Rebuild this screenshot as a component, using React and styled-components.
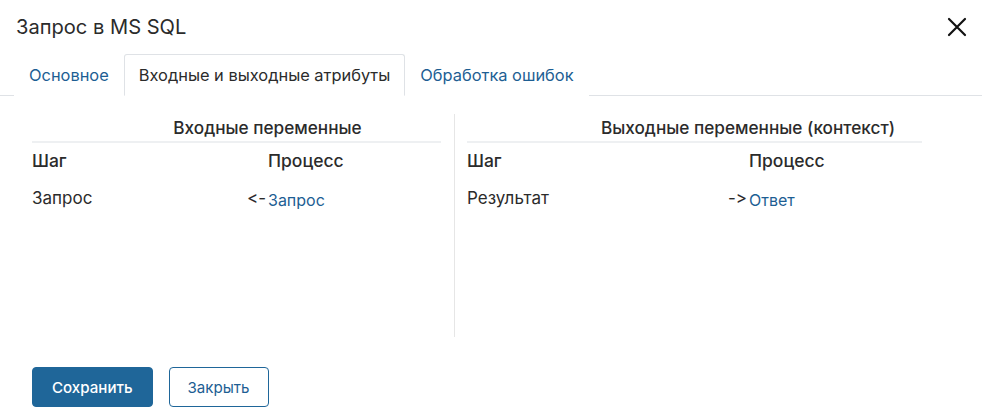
import styled, { createGlobalStyle } from 'styled-components';

const GlobalStyle = createGlobalStyle`
  html, body {
    margin: 0;
    padding: 0;
    background: #ffffff;
  }
  body {
    font-family: Inter, "Noto Sans", sans-serif;
    font-variant-ligatures: none;
    font-feature-settings: "calt" 0, "liga" 0;
    color: #2b2b2b;
  }
`;

const Dialog = styled.div`
  width: 982px;
  height: 415px;
  display: flex;
  flex-direction: column;
  background: #fff;
  box-sizing: border-box;
`;

const Header = styled.div`
  display: flex;
  align-items: center;
  justify-content: space-between;
  height: 54px;
  padding: 0 13px 0 16px;
`;

const Title = styled.h1`
  margin: 0;
  font-size: 20.1px;
  font-weight: 400;
  color: #2b2b2b;
`;

const CloseButton = styled.button`
  border: 0;
  background: none;
  padding: 0;
  width: 24px;
  height: 24px;
  display: flex;
  align-items: center;
  justify-content: center;
  cursor: pointer;
`;

const Tabs = styled.div`
  display: flex;
  align-items: flex-end;
  height: 41px;
  padding-left: 14px;
  border-bottom: 1px solid #dfe2e6;
`;

const Tab = styled.div`
  height: 40px;
  display: flex;
  align-items: center;
  padding: 0 14px;
  margin-bottom: -1px;
  font-size: 16.4px;
  color: ${({ $active }) => ($active ? '#2b2b2b' : '#1d5e93')};
  background: #fff;
  border: 1px solid ${({ $active }) => ($active ? '#dfe2e6' : 'transparent')};
  border-bottom-color: ${({ $active }) => ($active ? '#fff' : 'transparent')};
  border-radius: 3px 3px 0 0;
`;

const Body = styled.div`
  display: flex;
  padding: 18px 0 0 32px;
  height: 223px;
`;

const Panel = styled.div`
  width: ${({ $width }) => $width}px;
  display: flex;
  flex-direction: column;
`;

const Divider = styled.div`
  width: 1px;
  background: #e6e6e6;
  margin: 0 12px 0 13px;
`;

const PanelTitle = styled.div`
  font-size: 17.2px;
  font-weight: 500;
  text-align: center;
  padding-left: ${({ $shift }) => $shift}px;
  height: 29px;
  line-height: 28px;
  border-bottom: 2px solid #eef0f2;
  box-sizing: border-box;
  white-space: nowrap;
`;

const Row = styled.div`
  display: grid;
  grid-template-columns: ${({ $cols }) => $cols};
  align-items: center;
  height: ${({ $h }) => $h}px;
`;

const HeadCell = styled.div`
  font-size: 17.5px;
  font-weight: 500;
`;

const Cell = styled.div`
  font-size: 17px;
`;

const Arrow = styled.span`
  font-size: 17px;
  text-align: right;
  padding-right: 2px;
`;

const Link = styled.a`
  font-size: 16px;
  color: #1d5e93;
  text-decoration: none;
  margin-top: 3px;
`;

const Footer = styled.div`
  display: flex;
  gap: 16px;
  padding: 30px 0 0 32px;
`;

const Button = styled.button`
  height: 40px;
  padding: 0 ${({ $primary }) => ($primary ? 19 : 18)}px;
  border-radius: 4px;
  font-family: Inter, "Noto Sans", sans-serif;
  font-size: 15.1px;
  font-weight: ${({ $primary }) => ($primary ? 500 : 400)};
  color: ${({ $primary }) => ($primary ? '#ffffff' : '#1d5e93')};
  background: ${({ $primary }) => ($primary ? '#1f6699' : '#ffffff')};
  border: 1px solid #1f6699;
  cursor: pointer;
`;

const VarPanel = ({ width, title, shift, cols, step, arrow, proc }) => (
  <Panel $width={width}>
    <PanelTitle $shift={shift}>{title}</PanelTitle>
    <Row $cols={cols} $h={35}>
      <HeadCell>Шаг</HeadCell>
      <span />
      <HeadCell>Процесс</HeadCell>
    </Row>
    <Row $cols={cols} $h={40}>
      <Cell>{step}</Cell>
      <Arrow>{arrow}</Arrow>
      <Link href="#">{proc}</Link>
    </Row>
  </Panel>
);

export default function App() {
  return (
    <>
      <GlobalStyle />
      <Dialog>
        <Header>
          <Title>Запрос в MS SQL</Title>
          <CloseButton aria-label="Закрыть">
            <svg width="20" height="20" viewBox="0 0 20 20">
              <path d="M2 2 L18 18 M18 2 L2 18" stroke="#111" strokeWidth="2.2" strokeLinecap="round" />
            </svg>
          </CloseButton>
        </Header>
        <Tabs>
          <Tab>Основное</Tab>
          <Tab $active>Входные и выходные атрибуты</Tab>
          <Tab>Обработка ошибок</Tab>
        </Tabs>
        <Body>
          <VarPanel
            width={409}
            title="Входные переменные"
            shift={62}
            cols="214px 22px 1fr"
            step="Запрос"
            arrow="<-"
            proc="Запрос"
          />
          <Divider />
          <VarPanel
            width={455}
            title="Выходные переменные (контекст)"
            shift={107}
            cols="260px 22px 1fr"
            step="Результат"
            arrow="->"
            proc="Ответ"
          />
        </Body>
        <Footer>
          <Button $primary>Сохранить</Button>
          <Button>Закрыть</Button>
        </Footer>
      </Dialog>
    </>
  );
}
